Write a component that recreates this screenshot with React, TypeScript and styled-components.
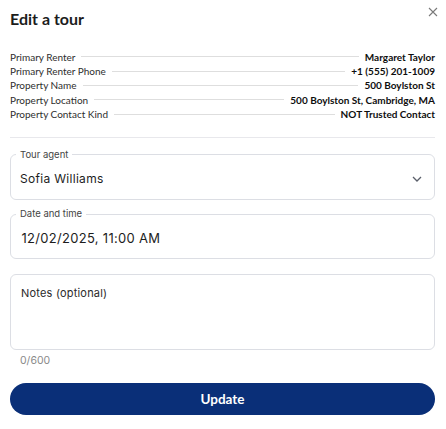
import React from "react";
import styled, { createGlobalStyle } from "styled-components";

const Global = createGlobalStyle`
  html, body { margin: 0; padding: 0; background: #ffffff; }
  body { font-family: Lato, "Noto Sans", sans-serif; color: #1b1b1b; }
  * { box-sizing: border-box; }
`;

const Dialog = styled.div`
  width: 446px;
  padding: 0 11px 0 10px;
  display: flex;
  flex-direction: column;
`;

const Header = styled.div`
  display: flex;
  justify-content: space-between;
  align-items: flex-start;
  padding-top: 9px;
`;

const Title = styled.h2`
  margin: 0;
  font-family: Lato, sans-serif;
  font-size: 16px;
  line-height: 20px;
  font-weight: 700;
  color: #1c1c1c;
`;

const CloseButton = styled.button`
  border: 0;
  background: none;
  padding: 0;
  margin: -4px -4px 0 0;
  width: 13px;
  height: 13px;
  display: flex;
  align-items: center;
  justify-content: center;
  cursor: pointer;
`;

const InfoList = styled.div`
  margin-top: 20.5px;
  display: flex;
  flex-direction: column;
`;

const InfoRow = styled.div`
  display: flex;
  align-items: center;
  height: 14.4px;
  font-family: Lato, sans-serif;
  font-size: 10px;
`;

const InfoLabel = styled.span`
  color: #2e2e2e;
  white-space: nowrap;
`;

const Leader = styled.span`
  flex: 1;
  height: 1px;
  background: #dedede;
  margin: 0 6px;
`;

const InfoValue = styled.span`
  color: #0e0e0e;
  font-weight: 700;
  white-space: nowrap;
`;

const Divider = styled.hr`
  border: 0;
  height: 1px;
  background: #e8e8ec;
  margin: 15.5px 0 0;
`;

const Field = styled.fieldset<{ $gap: number }>`
  margin: ${(p) => p.$gap}px 0 0;
  border: 1px solid #dcdee4;
  border-radius: 6px;
  padding: 11px 12px 12px 9px;
  min-width: 0;
  display: flex;
  align-items: center;
`;

const Legend = styled.legend`
  font-family: Inter, sans-serif;
  font-size: 9.5px;
  line-height: 10px;
  color: #444;
  padding: 0 4px;
  margin-left: -4px;
`;

const FieldValue = styled.div<{ $size: number; $indent?: number }>`
  flex: 1;
  font-family: Inter, sans-serif;
  font-size: ${(p) => p.$size}px;
  line-height: 16px;
  color: #1d1d1d;
  letter-spacing: 0.3px;
  padding-left: ${(p) => p.$indent ?? 0}px;
`;

const Notes = styled.textarea`
  margin-top: 14.7px;
  height: 76px;
  resize: none;
  border: 1px solid #dcdee4;
  border-radius: 6px;
  padding: 11px 10px;
  font-family: Inter, sans-serif;
  font-size: 11px;
  line-height: 14px;
  letter-spacing: 0.2px;
  outline: none;
  &::placeholder { color: #2a2a2a; }
`;

const Counter = styled.div`
  margin: 5px 0 0 10px;
  font-family: Inter, sans-serif;
  font-size: 10.5px;
  line-height: 12px;
  color: #8a8a8a;
`;

const UpdateButton = styled.button`
  margin-top: 15.6px;
  height: 32px;
  border: 0;
  border-radius: 16px;
  background: #0a2f78;
  color: #ffffff;
  font-family: Lato, sans-serif;
  font-weight: 700;
  font-size: 13.5px;
  cursor: pointer;
`;

const rows: [string, string][] = [
  ["Primary Renter", "Margaret Taylor"],
  ["Primary Renter Phone", "+1 (555) 201-1009"],
  ["Property Name", "500 Boylston St"],
  ["Property Location", "500 Boylston St, Cambridge, MA"],
  ["Property Contact Kind", "NOT Trusted Contact"],
];

export default function App() {
  return (
    <>
      <Global />
      <Dialog>
        <Header>
          <Title>Edit a tour</Title>
          <CloseButton aria-label="Close">
            <svg width="10" height="10" viewBox="0 0 10 10">
              <path d="M1 1L9 9M9 1L1 9" stroke="#7a7a7a" strokeWidth="1.1" />
            </svg>
          </CloseButton>
        </Header>
        <InfoList>
          {rows.map(([l, v]) => (
            <InfoRow key={l}>
              <InfoLabel>{l}</InfoLabel>
              <Leader />
              <InfoValue>{v}</InfoValue>
            </InfoRow>
          ))}
        </InfoList>
        <Divider />
        <Field $gap={12}>
          <Legend>Tour agent</Legend>
          <FieldValue $size={12}>Sofia Williams</FieldValue>
          <svg width="10" height="6" viewBox="0 0 10 6">
            <path d="M1 1L5 5L9 1" fill="none" stroke="#5a5f6a" strokeWidth="1.3" />
          </svg>
        </Field>
        <Field $gap={9.3}>
          <Legend>Date and time</Legend>
          <FieldValue $size={13} $indent={1.5}>12/02/2025, 11:00 AM</FieldValue>
        </Field>
        <Notes placeholder="Notes (optional)" />
        <Counter>0/600</Counter>
        <UpdateButton>Update</UpdateButton>
      </Dialog>
    </>
  );
}
